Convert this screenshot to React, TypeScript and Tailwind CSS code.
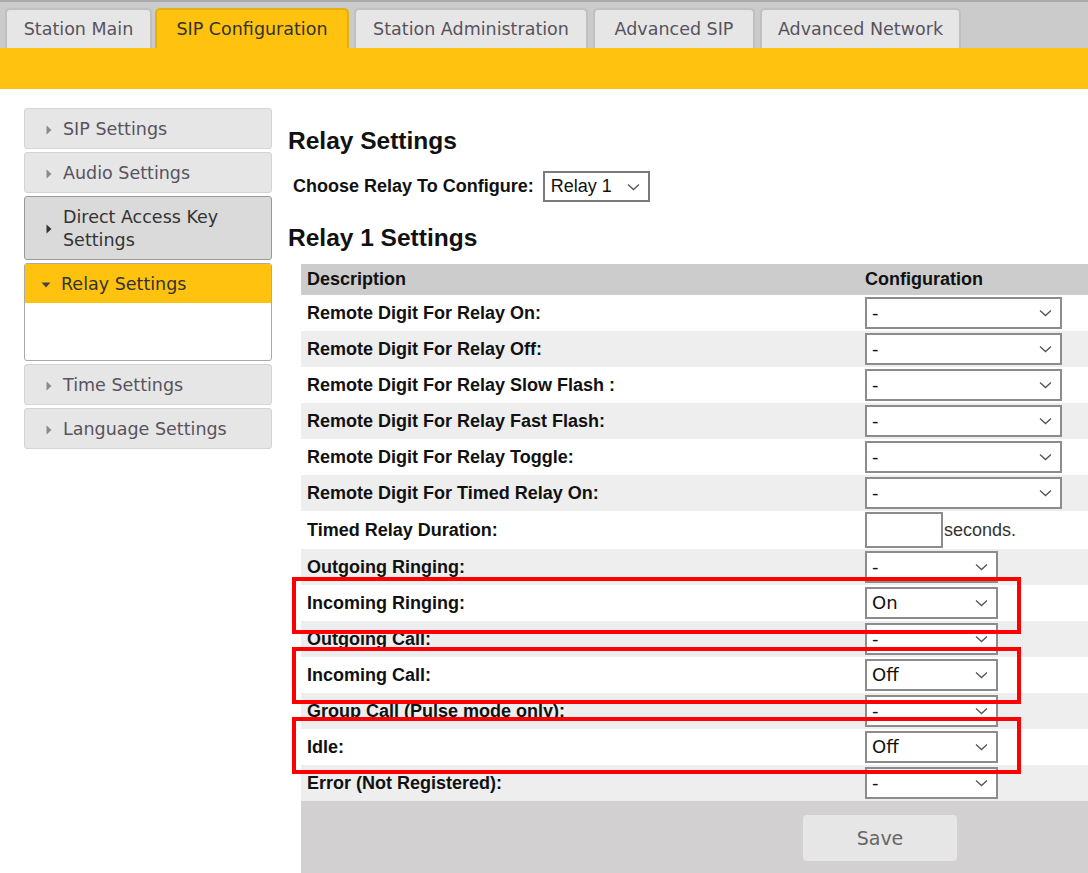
import React from "react";

const tabs = [
  { name: "Station Main", w: "w-[147px] -mr-[2px]" },
  { name: "SIP Configuration", w: "w-[194px]" },
  { name: "Station Administration", w: "w-[234px]" },
  { name: "Advanced SIP", w: "w-[162px]" },
  { name: "Advanced Network", w: "w-[201px]" },
];

type Row = { label: string; kind: "wide" | "narrow" | "input"; value?: string };

const rows: Row[] = [
  { label: "Remote Digit For Relay On:", kind: "wide" },
  { label: "Remote Digit For Relay Off:", kind: "wide" },
  { label: "Remote Digit For Relay Slow Flash :", kind: "wide" },
  { label: "Remote Digit For Relay Fast Flash:", kind: "wide" },
  { label: "Remote Digit For Relay Toggle:", kind: "wide" },
  { label: "Remote Digit For Timed Relay On:", kind: "wide" },
  { label: "Timed Relay Duration:", kind: "input" },
  { label: "Outgoing Ringing:", kind: "narrow" },
  { label: "Incoming Ringing:", kind: "narrow", value: "On" },
  { label: "Outgoing Call:", kind: "narrow" },
  { label: "Incoming Call:", kind: "narrow", value: "Off" },
  { label: "Group Call (Pulse mode only):", kind: "narrow" },
  { label: "Idle:", kind: "narrow", value: "Off" },
  { label: "Error (Not Registered):", kind: "narrow" },
];

const side = ["SIP Settings", "Audio Settings"];
const sideBottom = ["Time Settings", "Language Settings"];

function Chevron() {
  return (
    <svg width="13" height="8" viewBox="0 0 13 8" className="shrink-0">
      <path d="M1 1.5 L6.5 6.5 L12 1.5" fill="none" stroke="#555" strokeWidth="1.3" />
    </svg>
  );
}

function Tri({ color = "#8a8a8a" }: { color?: string }) {
  return (
    <svg width="6" height="10" viewBox="0 0 6 10" className="shrink-0">
      <path d="M0.5 0.5 L5.5 5 L0.5 9.5 Z" fill={color} />
    </svg>
  );
}

function Select({ value = "-", wide }: { value?: string; wide: boolean }) {
  return (
    <div
      className={`flex h-[32px] items-center justify-between border-2 border-[#8c8c8c] bg-white pl-[5px] pr-[8px] font-['DejaVu_Sans',sans-serif] text-[18px] font-normal text-[#111] ${
        wide ? "w-[197px]" : "w-[133px]"
      }`}
    >
      <span className="leading-none">{value}</span>
      <Chevron />
    </div>
  );
}

export default function App() {
  return (
    <div className="relative h-[873px] w-[1088px] overflow-hidden bg-white">
      {/* tab bar */}
      <div className="flex h-[48px] items-end gap-[5px] border-t-2 border-[#a9a9a9] bg-[#cbcbcb] pl-[5px]">
        {tabs.map((t, i) => (
          <div
            key={t.name}
            className={`flex h-[40px] items-center justify-center rounded-t-[5px] border-x-2 border-t-2 font-['DejaVu_Sans',sans-serif] text-[17.5px] ${t.w} ${
              i === 1 ? "border-[#e2b10f] bg-[#ffc20e] text-[#333]" : "border-[#c0c0c0] bg-[#e6e6e6] text-[#58535d]"
            }`}
          >
            {t.name}
          </div>
        ))}
      </div>
      <div className="h-[41px] bg-[#ffc20e]" />

      <div className="flex">
        {/* sidebar */}
        <div className="ml-[24px] mt-[19px] flex w-[248px] flex-col gap-[3px] font-['DejaVu_Sans',sans-serif] text-[17.5px]">
          {side.map((s) => (
            <div key={s} className="flex h-[41px] items-center gap-[11px] rounded-[3px] border border-[#d4d4d4] bg-[#e6e6e6] pl-[21px] pt-[2px] text-[#58535d]">
              <Tri />
              <span>{s}</span>
            </div>
          ))}
          <div className="flex h-[64px] items-center gap-[11px] rounded-[3px] border border-[#9a9a9a] bg-[#dadada] pl-[21px] pt-[2px] leading-[23px] text-[#333]">
            <Tri color="#333" />
            <span>
              Direct Access Key
              <br />
              Settings
            </span>
          </div>
          <div className="h-[98px] overflow-hidden rounded-[3px] border border-[#aaa] bg-white">
            <div className="flex h-[39px] items-center gap-[10px] bg-[#ffc20e] pl-[16px] pt-[2px] text-[#333]">
              <svg width="10" height="6" viewBox="0 0 10 6">
                <path d="M0.5 0.5 L9.5 0.5 L5 5.5 Z" fill="#444" />
              </svg>
              <span>Relay Settings</span>
            </div>
          </div>
          {sideBottom.map((s) => (
            <div key={s} className="flex h-[41px] items-center gap-[11px] rounded-[3px] border border-[#d4d4d4] bg-[#e6e6e6] pl-[21px] pt-[2px] text-[#58535d]">
              <Tri />
              <span>{s}</span>
            </div>
          ))}
        </div>

        {/* main */}
        <div className="ml-[16px] flex-1 font-['Liberation_Sans',Arial,sans-serif] text-[#111]">
          <h1 className="mt-[38px] text-[24.5px] font-bold leading-[28px]">Relay Settings</h1>
          <div className="ml-[5px] mt-[16px] flex items-center gap-[9px]">
            <span className="text-[18px] font-bold">Choose Relay To Configure:</span>
            <div className="flex h-[31px] w-[107px] items-center justify-between border-2 border-[#7a7a7a] pl-[6px] pr-[8px] text-[18px]">
              <span>Relay 1</span>
              <Chevron />
            </div>
          </div>
          <h2 className="mt-[22px] text-[24.5px] font-bold leading-[28px]">Relay 1 Settings</h2>

          <div className="ml-[13px] mt-[12px]">
            <div className="flex h-[31px] items-center bg-[#cccccc] text-[18px] font-bold">
              <span className="w-[564px] pl-[6px]">Description</span>
              <span>Configuration</span>
            </div>
            {rows.map((r, i) => (
              <div
                key={r.label}
                className={`flex items-center text-[18px] font-bold ${r.kind === "input" ? "h-[38px]" : "h-[36px]"} ${
                  i % 2 === 0 ? "bg-white" : "bg-[#eeeeee]"
                }`}
              >
                <span className="w-[564px] pl-[6px]">{r.label}</span>
                {r.kind === "input" ? (
                  <div className="flex items-center">
                    <div className="h-[36px] w-[78px] border-2 border-[#8c8c8c] bg-white" />
                    <span className="pl-[1px] text-[18px] font-normal text-[#333]">seconds.</span>
                  </div>
                ) : (
                  <Select wide={r.kind === "wide"} value={r.value} />
                )}
              </div>
            ))}
            <div className="flex h-[74px] items-center bg-[#d2d0d1] pl-[502px]">
              <div className="flex h-[46px] w-[154px] items-center justify-center rounded-[4px] bg-[#e6e6e6] font-['DejaVu_Sans',sans-serif] text-[19px] text-[#666]">
                Save
              </div>
            </div>
          </div>
        </div>
      </div>

      {/* highlight boxes */}
      <div className="absolute left-[292px] top-[577px] h-[57px] w-[729px] border-4 border-[#ff0000]" />
      <div className="absolute left-[292px] top-[647px] h-[57px] w-[729px] border-4 border-[#ff0000]" />
      <div className="absolute left-[292px] top-[717px] h-[57px] w-[729px] border-4 border-[#ff0000]" />
    </div>
  );
}
